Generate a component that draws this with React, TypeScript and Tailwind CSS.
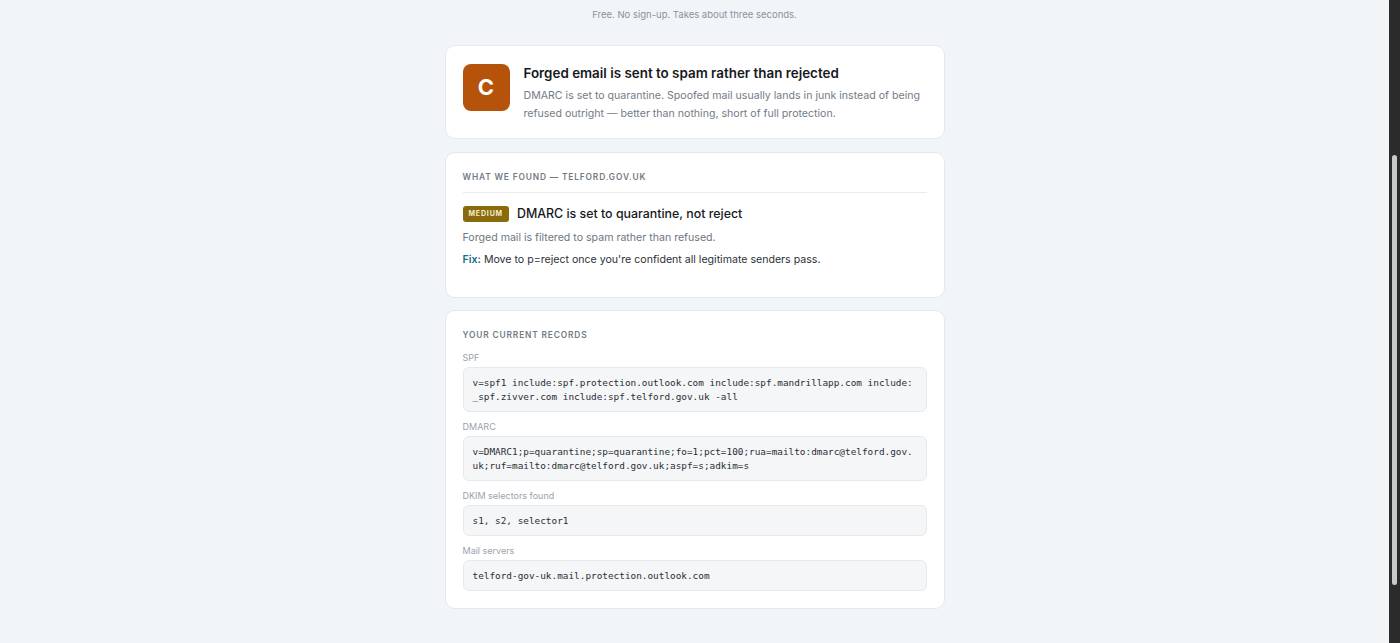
import React from "react";

const records = [
  {
    label: "SPF",
    value:
      "v=spf1 include:spf.protection.outlook.com include:spf.mandrillapp.com include:_spf.zivver.com include:spf.telford.gov.uk -all",
  },
  {
    label: "DMARC",
    value:
      "v=DMARC1;p=quarantine;sp=quarantine;fo=1;pct=100;rua=mailto:dmarc@telford.gov.uk;ruf=mailto:dmarc@telford.gov.uk;aspf=s;adkim=s",
  },
  { label: "DKIM selectors found", value: "s1, s2, selector1" },
  { label: "Mail servers", value: "telford-gov-uk.mail.protection.outlook.com" },
];

const Card = ({ children, className = "" }: { children: React.ReactNode; className?: string }) => (
  <div className={`w-[500px] rounded-[10px] border border-[#e4e8ee] bg-white px-[17px] ${className}`}>
    {children}
  </div>
);

export default function App() {
  return (
    <div
      className="flex h-[643px] w-full overflow-hidden bg-[#f2f5f8] text-[#1f2328]"
      style={{ fontFamily: "Inter, 'Noto Sans', sans-serif" }}
    >
      <div className="flex flex-1 flex-col items-center">
        <p className="mt-[9px] text-[9.5px] leading-[12px] text-[#8a929c]">
          Free. No sign-up. Takes about three seconds.
        </p>

        {/* grade */}
        <Card className="mt-[24px] flex h-[94px] gap-[14px] pt-[18px]">
          <div className="flex h-[47px] w-[47px] shrink-0 items-center justify-center rounded-[8px] bg-[#b45309] text-[22px] font-bold text-white">
            C
          </div>
          <div>
            <h2 className="text-[13.4px] font-semibold leading-[18px] text-[#16191d]">
              Forged email is sent to spam rather than rejected
            </h2>
            <p className="mt-[5px] text-[10.6px] leading-[18px] text-[#737b86]">
              DMARC is set to quarantine. Spoofed mail usually lands in junk instead of being refused outright — better
              than nothing, short of full protection.
            </p>
          </div>
        </Card>

        {/* findings */}
        <Card className="mt-[13px] h-[146px] pt-[18px]">
          <div className="border-b border-[#e8ebef] pb-[9px] text-[8.4px] font-semibold uppercase leading-[12px] tracking-[0.1em] text-[#737b86]">
            What we found — telford.gov.uk
          </div>
          <div className="mt-[13px] flex items-center gap-[8px]">
            <span className="rounded-[3px] bg-[#8a6b0b] px-[6px] py-[3px] text-[7px] font-bold uppercase leading-[10px] tracking-[0.12em] text-[#f6ecd0]">
              Medium
            </span>
            <span className="text-[12.4px] font-medium leading-[16px] text-[#16191d]">
              DMARC is set to quarantine, not reject
            </span>
          </div>
          <p className="mt-[8px] text-[10.6px] leading-[16px] text-[#6e7680]">
            Forged mail is filtered to spam rather than refused.
          </p>
          <p className="mt-[6px] text-[10.6px] leading-[16px] text-[#2c3138]">
            <span className="font-semibold text-[#1d6b86]">Fix:</span> Move to p=reject once you're confident all
            legitimate senders pass.
          </p>
        </Card>

        {/* records */}
        <Card className="mt-[12px] pt-[18px] pb-[17px]">
          <div className="text-[8.4px] font-semibold uppercase leading-[12px] tracking-[0.1em] text-[#737b86]">
            Your current records
          </div>
          <div className="mt-[10px] flex flex-col">
            {records.map((r, i) => (
              <div key={r.label} className={i ? "mt-[8px]" : ""}>
                <div className="text-[9px] leading-[14px] text-[#9ba2ab]">{r.label}</div>
                <div
                  className="mt-[2px] break-all rounded-[6px] border border-[#e6e9ee] bg-[#f4f6f8] px-[9px] pt-[8px] pb-[7px] text-[9.4px] leading-[14px] text-[#2a2f35]"
                  style={{ fontFamily: "'DejaVu Sans Mono', 'Liberation Mono', monospace" }}
                >
                  {r.value}
                </div>
              </div>
            ))}
          </div>
        </Card>
      </div>

      {/* scrollbar */}
      <div className="flex w-[11px] shrink-0 flex-col bg-[#2b2b2b] px-[3px] pt-[155px] pb-[58px]">
        <div className="flex-1 rounded-full bg-[#c9c9c9]" />
      </div>
    </div>
  );
}
